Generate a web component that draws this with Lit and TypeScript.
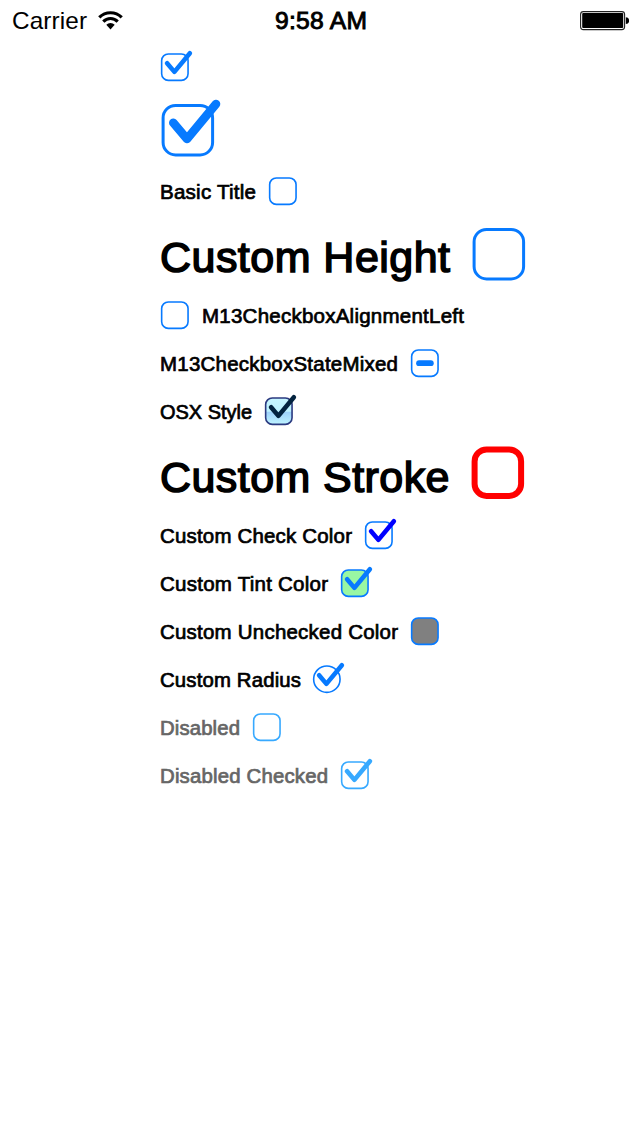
import { LitElement, html, svg, css, nothing } from "lit";
import { customElement, property, query } from "lit/decorators.js";

interface BoxStyle {
  stroke?: string;
  fill?: string;
  check?: string;
  strokeWidth?: number;
  round?: boolean;
  dy?: number;
}

interface Row {
  title?: string;
  width?: number;
  large?: boolean;
  left?: boolean;
  disabled?: boolean;
  state?: "checked" | "mixed";
  box?: BoxStyle;
}

const BLUE = "#077aff";

const ROWS: Row[] = [
  { state: "checked" },
  { state: "checked", large: true },
  { title: "Basic Title", width: 96 },
  { title: "Custom Height", width: 290, large: true },
  { title: "M13CheckboxAlignmentLeft", width: 262, left: true },
  { title: "M13CheckboxStateMixed", width: 238, state: "mixed" },
  { title: "OSX Style", width: 92, state: "checked", box: { stroke: "#2b3a80", fill: "url(#aqua)", check: "#03233f" } },
  { title: "Custom Stroke", width: 289.5, large: true, box: { stroke: "#ff0000", strokeWidth: 6, dy: -1.5 } },
  { title: "Custom Check Color", width: 192, state: "checked", box: { check: "#0000ff" } },
  { title: "Custom Tint Color", width: 168, state: "checked", box: { fill: "#99f7a3" } },
  { title: "Custom Unchecked Color", width: 238, box: { fill: "#808080" } },
  { title: "Custom Radius", width: 141, state: "checked", box: { round: true } },
  { title: "Disabled", width: 80, disabled: true },
  { title: "Disabled Checked", width: 168, state: "checked", disabled: true },
];

/**
 * Text that fills the given width: half of the difference goes into
 * tracking, the rest into a slight horizontal stretch.
 */
@customElement("fitted-text")
export class FittedText extends LitElement {
  @property() text = "";
  @property({ type: Number }) width = 0;
  @query("span") span!: HTMLSpanElement;

  static styles = css`
    :host { display: block; white-space: nowrap; }
    span { display: inline-block; transform-origin: 0 50%; }
  `;

  updated() {
    const { style } = this.span;
    style.transform = "none";
    style.letterSpacing = "0px";
    const natural = this.span.getBoundingClientRect().width;
    const tracking = (this.width - natural) / 2 / this.text.length;
    style.letterSpacing = `${tracking}px`;
    const tracked = this.span.getBoundingClientRect().width;
    style.transform = `scaleX(${this.width / (tracked - tracking)})`;
    this.style.width = `${this.width}px`;
  }

  render() {
    return html`<span>${this.text}</span>`;
  }
}

@customElement("check-box")
export class CheckBox extends LitElement {
  @property({ attribute: false }) row: Row = {};

  static styles = css`
    :host { display: block; flex: none; }
    svg { display: block; width: 32px; height: 32px; overflow: visible; }
    .large { width: 60px; height: 60px; }
  `;

  render() {
    const { large, disabled, state, box = {} } = this.row;
    const main = disabled ? "#37a9ff" : BLUE;
    const w = box.strokeWidth ?? 3;
    const size = 52.5 - w;
    const y = 5.9 + w / 2 + (box.dy ?? 0);
    const check = box.check ?? main;
    return html`
      <svg class=${large ? "large" : ""} viewBox="0 0 60 60">
        <defs>
          <linearGradient id="aqua" x1="0" y1="0" x2="0" y2="1">
            <stop offset="0" stop-color="#c8f6ff"></stop>
            <stop offset="0.5" stop-color="#bdf2ff"></stop>
            <stop offset="0.55" stop-color="#9fd3fb"></stop>
            <stop offset="1" stop-color="#bff4ff"></stop>
          </linearGradient>
        </defs>
        <rect x=${1.6 + w / 2} y=${y} width=${size} height=${size}
          rx=${box.round ? size / 2 : 14 - w / 2 + (w > 3 ? 1 : 0)}
          fill=${box.fill ?? "none"} stroke=${box.stroke ?? main} stroke-width=${w}></rect>
        ${state === "checked"
          ? svg`<path d="M13.3 24.8L27 41L56 6" fill="none" stroke=${check}
              stroke-width="8.6" stroke-linecap="round" stroke-linejoin="round"></path>`
          : nothing}
        ${state === "mixed"
          ? svg`<path d="M17 32.2H39" fill="none" stroke=${check} stroke-width="11" stroke-linecap="round"></path>`
          : nothing}
      </svg>`;
  }
}

@customElement("app-root")
export class AppRoot extends LitElement {
  static styles = css`
    :host {
      display: block;
      min-height: 1136px;
      background: #fff;
      color: #000;
      font-family: "Liberation Sans", Arial, sans-serif;
    }
    .status {
      display: grid;
      grid-template-columns: 1fr auto 1fr;
      height: 40px;
      padding: 0 11px 0 12px;
      font-size: 24px;
      line-height: 41px;
    }
    .carrier { display: flex; gap: 11px; }
    .time { -webkit-text-stroke: 0.9px #000; }
    .wifi { display: block; width: 26px; height: 40px; }
    .battery { display: block; width: 50px; height: 40px; justify-self: end; }
    .list {
      display: flex;
      flex-direction: column;
      gap: 16px;
      padding: 10px 0 0 160px;
    }
    .row {
      display: flex;
      gap: 12px;
      height: 32px;
      font-size: 20px;
      line-height: 32px;
      -webkit-text-stroke: 0.7px currentColor;
    }
    .row.large {
      gap: 20.6px;
      height: 60px;
      font-size: 42px;
      line-height: 60px;
      -webkit-text-stroke-width: 1.5px;
    }
    .row.left { flex-direction: row-reverse; justify-content: flex-end; gap: 10px; }
    .row.round { gap: 11px; }
    .row.disabled { color: #666; }
    .label { padding-top: 2px; }
    .large .label { padding-top: 6px; }
  `;

  render() {
    return html`
      <header class="status">
        <div class="carrier">
          <fitted-text text="Carrier" width="75"></fitted-text>
          <svg class="wifi" viewBox="0 0 26 40">
            <g fill="none" stroke="#000">
              <path d="M1.3 17.4A15.8 15.8 0 0 1 23.7 17.4" stroke-width="3.2"></path>
              <path d="M5.3 21.6A9.8 9.8 0 0 1 19.7 21.6" stroke-width="3.1"></path>
            </g>
            <path d="M12.5 29.4L8.3 24.8A6 6 0 0 1 16.7 24.8Z"></path>
          </svg>
        </div>
        <fitted-text class="time" text="9:58 AM" width="92"></fitted-text>
        <svg class="battery" viewBox="0 0 50 40">
          <rect x="1.6" y="11.6" width="44" height="18" rx="2.8" fill="#fff" stroke="#222" stroke-width="1.1"></rect>
          <rect x="3.2" y="13" width="41" height="15" rx="1"></rect>
          <path d="M46.8 17.2A3.4 3.4 0 0 1 46.8 24Z"></path>
        </svg>
      </header>
      <main class="list">
        ${ROWS.map((row) => html`
          <div class="row ${row.large ? "large" : ""} ${row.left ? "left" : ""} ${row.disabled ? "disabled" : ""} ${row.box?.round ? "round" : ""}">
            ${row.title
              ? html`<fitted-text class="label" .text=${row.title} .width=${row.width ?? 0}></fitted-text>`
              : nothing}
            <check-box .row=${row}></check-box>
          </div>`)}
      </main>`;
  }
}
